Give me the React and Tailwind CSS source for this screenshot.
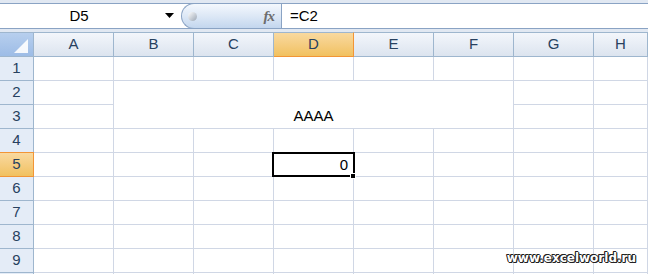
import { Fragment } from "react";

const cols = ["A", "B", "C", "D", "E", "F", "G", "H"];
const rows = [1, 2, 3, 4, 5, 6, 7, 8, 9, 10];

const Cell = ({ col, row }) => {
    const selected = col === "D" && row === 5;
    return (
        <div className="relative border-r border-b border-[#d0d7e5]">
            {selected && (
                <>
                    <div className="absolute -left-[2px] -top-px -right-[2px] -bottom-px border-2 border-black z-10" />
                    <div className="absolute right-[5px] top-[2px] text-[15px] text-black leading-[20px]">0</div>
                    <div className="absolute -right-[3px] -bottom-[3px] size-[6px] bg-black border border-white z-20" />
                </>
            )}
        </div>
    );
};

const App = () => {
    return (
        <div className="relative w-[648px] h-[274px] overflow-hidden bg-white font-['Liberation_Sans',Arial,sans-serif]">
            {/* formula bar */}
            <div className="h-[32px] bg-[#e1e8f2] py-[3px]">
                <div className="h-[26px] flex border-y border-[#8aa3c4] bg-white">
                    <div className="w-[158px] flex items-center justify-center text-[15px] text-black">D5</div>
                    <div className="w-[23px] flex items-center">
                        <svg width="10" height="6" viewBox="0 0 10 6" className="ml-[7px]">
                            <path d="M0 0 H9 L4.5 5 Z" fill="#000" />
                        </svg>
                    </div>
                    <div className="-my-px h-[26px] w-[100px] flex items-center justify-between rounded-l-full border border-r-0 border-[#8aa3c4] bg-gradient-to-b from-[#f4f8fd] via-[#dde8f6] to-[#c3d6ee] pl-[6px] pr-[7px]">
                        <div className="size-[9px] rounded-full bg-gradient-to-br from-white to-[#9ba6b4]" />
                        <span className="font-['Liberation_Serif',serif] italic font-bold text-[15px] text-[#6d6d6d] tracking-[-1px]">fx</span>
                    </div>
                    <div className="flex-1 flex items-center border-l border-[#8aa3c4] pl-[8px] text-[15px] text-black">=C2</div>
                </div>
            </div>

            {/* sheet */}
            <div className="grid grid-cols-[34px_repeat(7,80px)_1fr] grid-rows-[25px_repeat(10,24px)]">
                <div className="relative border-t border-r border-b border-[#9eb6ce] bg-gradient-to-b from-[#b7cfee] to-[#9dbce6]">
                    <svg width="34" height="23" viewBox="0 0 34 23" className="absolute inset-0">
                        <path d="M14 20 L28 6 L28 20 Z" fill="#fff" opacity="0.9" />
                    </svg>
                </div>
                {cols.map((c) =>
                    c === "D" ? (
                        <div key={c} className="flex items-center justify-center border-t border-t-[#9eb6ce] border-r border-b border-[#f29536] bg-gradient-to-b from-[#f9d99f] to-[#f1c15f] text-[15px] text-[#27415f]">
                            {c}
                        </div>
                    ) : (
                        <div key={c} className="flex items-center justify-center border-t border-r border-b border-[#9eb6ce] bg-gradient-to-b from-[#f3f6fb] to-[#dce4ef] text-[15px] text-[#27415f]">
                            {c}
                        </div>
                    )
                )}
                {rows.map((r) => (
                    <Fragment key={r}>
                        {r === 5 ? (
                            <div className="flex items-center justify-center border-t border-t-[#f29536] -mt-px border-r border-b border-[#f29536] bg-gradient-to-b from-[#f9d99f] to-[#f1c15f] text-[15px] text-[#27415f]">
                                {r}
                            </div>
                        ) : (
                            <div className="flex items-center justify-center border-r border-b border-[#9eb6ce] bg-[#e4ecf7] text-[15px] text-[#27415f]">
                                {r < 10 ? r : ""}
                            </div>
                        )}
                        {cols.map((c) => {
                            if (r === 2 && c === "B") {
                                return (
                                    <div key={c + r} className="col-span-5 row-span-2 flex items-end justify-center pb-[1px] border-r border-b border-[#d0d7e5] text-[15px] text-black">
                                        AAAA
                                    </div>
                                );
                            }
                            if ((r === 2 || r === 3) && ["B", "C", "D", "E", "F"].includes(c)) return null;
                            return <Cell key={c + r} col={c} row={r} />;
                        })}
                    </Fragment>
                ))}
            </div>

            {/* watermark */}
            <div className="absolute right-[12px] bottom-[7px] font-['DejaVu_Sans',sans-serif] font-bold text-[12px] text-white [text-shadow:-1px_0_#222,1px_0_#222,0_1px_#222,0_-1px_#222,1px_1px_#222,-1px_-1px_#222]">
                www.excelworld.ru
            </div>
        </div>
    );
};

export default App;
